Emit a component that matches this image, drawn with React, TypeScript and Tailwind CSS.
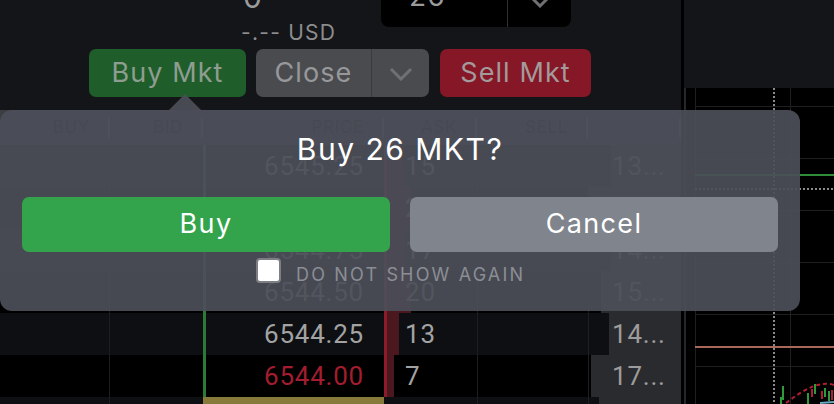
import React from "react";

type Row = {
  price: string;
  ask: string;
  askBar: number;
  right: string;
  box: number;
  last?: boolean;
  mark?: boolean;
};

const rows: Row[] = [
  { price: "6545.25", ask: "15", askBar: 16, right: "13...", box: 70 },
  { price: "6545.00", ask: "20", askBar: 24, right: "13...", box: 92 },
  { price: "6544.75", ask: "17", askBar: 18, right: "14...", box: 70 },
  { price: "6544.50", ask: "20", askBar: 24, right: "15...", box: 80 },
  { price: "6544.25", ask: "13", askBar: 12, right: "14...", box: 72 },
  { price: "6544.00", ask: "7", askBar: 7, right: "17...", box: 90, last: true },
  { price: "6543.75", ask: "", askBar: 0, right: "", box: 82, mark: true },
];

const headers = [
  { label: "BUY", w: "w-[110px]" },
  { label: "BID", w: "w-[93px]" },
  { label: "PRICE", w: "w-[181px]" },
  { label: "ASK", w: "w-[93px]" },
  { label: "SELL", w: "w-[111px]" },
  { label: "", w: "w-[93px]" },
];

function Chevron({ className }: { className?: string }) {
  return (
    <svg width="24" height="14" viewBox="0 0 24 14" className={className}>
      <polyline points="2,2 12,12 22,2" fill="none" stroke="#6f7074" strokeWidth="3" />
    </svg>
  );
}

function OrderBook() {
  return (
    <div className="flex flex-col font-['Roboto',sans-serif]">
      <div className="flex h-[35px] shrink-0 bg-[#3c3e44]">
        {headers.map((h, i) => (
          <div key={i} className={`${h.w} flex items-center justify-end`}>
            <span className="mr-[18px] font-['Inter',sans-serif] text-[17px] tracking-[0.04em] text-[#0a0a0a]">
              {h.label}
            </span>
            <div className="w-[2px] h-[20px] bg-[#6a6c72]" />
          </div>
        ))}
      </div>
      {rows.map((r, i) => (
        <div
          key={i}
          className={`flex h-[42px] shrink-0 text-[26px] leading-none tracking-[0.03em] ${i % 2 === 0 ? "bg-[#0e0f12]" : "bg-black"}`}
        >
          <div className="w-[110px] border-r border-[#1d1e21]" />
          <div className="w-[93px]" />
          <div
            className={`w-[181px] flex items-center justify-end pr-[20px] border-l-[3px] ${
              r.mark ? "border-transparent bg-[#877a3a]" : "border-[#2b7a37]"
            } ${r.last ? "text-[#a31d2e]" : "text-[#a3a3a3]"}`}
          >
            {r.mark ? "" : r.price}
          </div>
          <div
            className={`w-[93px] relative flex items-center pl-[18px] text-[#a3a3a3] border-l-[3px] ${
              r.mark ? "border-transparent" : "border-[#8e1b2a]"
            }`}
          >
            <div className="absolute left-0 inset-y-0 bg-[#4b1820]" style={{ width: r.askBar }} />
            <span className="relative">{r.ask}</span>
          </div>
          <div className="w-[111px] border-l border-[#1d1e21]" />
          <div className="w-[93px] relative flex items-center pl-[23px] border-l border-[#1d1e21] text-[#9c9c9c]">
            <div className="absolute right-0 inset-y-0 bg-[#2a2b2e]" style={{ width: r.box }} />
            <span className="relative">{r.right}</span>
          </div>
        </div>
      ))}
    </div>
  );
}

function Chart() {
  const hLines = [18.5, 70.5, 122.5, 174.5, 226.5, 278.5];
  return (
    <div className="w-[150px] shrink-0 flex flex-col">
      <div className="h-[88px] shrink-0 bg-[#141519]" />
      <div className="flex-1 bg-black">
        <svg width="150" height="316" viewBox="0 0 150 316" className="block">
          <rect x="0" y="0" width="2" height="316" fill="#26272a" />
          <line x1="11.5" y1="0" x2="11.5" y2="316" stroke="#1e1f21" />
          <line x1="106.5" y1="0" x2="106.5" y2="316" stroke="#1e1f21" />
          {hLines.map((y) => (
            <line key={y} x1="11" y1={y} x2="150" y2={y} stroke="#1e1f21" />
          ))}
          <line x1="11" y1="87" x2="150" y2="87" stroke="#2f8c3b" strokeWidth="2" />
          <line x1="11" y1="101" x2="150" y2="101" stroke="#8a8a8a" strokeWidth="2" strokeDasharray="2 2" />
          <line x1="90" y1="0" x2="90" y2="316" stroke="#8a8a8a" strokeWidth="2" strokeDasharray="2 2" />
          <line x1="11" y1="259" x2="150" y2="259" stroke="#a8685a" strokeWidth="2" />
          <rect x="98" y="298" width="2" height="14" fill="#2f9a3c" />
          <rect x="96" y="309" width="2" height="7" fill="#2f9a3c" />
          <rect x="123" y="305" width="2" height="11" fill="#2f9a3c" />
          <rect x="130" y="296" width="2" height="10" fill="#2f9a3c" />
          <rect x="140" y="300" width="2" height="9" fill="#2f9a3c" />
          <rect x="144" y="303" width="2" height="10" fill="#2f9a3c" />
          <rect x="127" y="301" width="2" height="8" fill="#b01e30" />
          <rect x="137" y="303" width="2" height="8" fill="#b01e30" />
          <rect x="147" y="302" width="2" height="10" fill="#b01e30" />
          <path
            d="M102 315 C 114 306, 127 297, 139 296 S 150 298, 152 299"
            fill="none"
            stroke="#b01e30"
            strokeWidth="2"
            strokeDasharray="4 3"
          />
          <line x1="136" y1="315" x2="150" y2="314" stroke="#6aa8c0" strokeWidth="2" />
        </svg>
      </div>
    </div>
  );
}

function Modal() {
  return (
    <div className="absolute left-0 top-[110px] w-[800px] h-[201px] rounded-[12px] bg-[rgba(75,79,88,0.93)] flex flex-col pt-[19px] px-[22px]">
      <div className="absolute left-[169px] -top-[16px] w-0 h-0 border-l-[16px] border-r-[16px] border-b-[16px] border-l-transparent border-r-transparent border-b-[rgba(75,79,88,0.93)]" />
      <div className="h-[40px] leading-[40px] text-center text-white text-[30px] tracking-[0.05em]">
        Buy 26 MKT?
      </div>
      <div className="mt-[28px] flex gap-[20px]">
        <button className="flex-1 h-[55px] rounded-[7px] bg-[#34a44c] text-white text-[27px] tracking-[0.05em]">
          Buy
        </button>
        <button className="flex-1 h-[55px] rounded-[7px] bg-[#80848c] text-white text-[27px] tracking-[0.05em]">
          Cancel
        </button>
      </div>
      <div className="mt-[6px] flex items-start pl-[234px]">
        <div className="w-[25px] h-[25px] rounded-[4px] bg-white border-2 border-[#7d7f84]" />
        <span className="ml-[15px] mt-[5px] leading-[24px] text-[18px] tracking-[0.12em] text-[#8b8e95]">
          DO NOT SHOW AGAIN
        </span>
      </div>
    </div>
  );
}

export default function App() {
  return (
    <div className="w-[834px] h-[404px] overflow-hidden relative flex bg-[#141519] font-['Inter',sans-serif]">
      <div className="w-[684px] shrink-0 flex flex-col border-r-[3px] border-black">
        <div className="h-[49px] shrink-0 flex items-start pl-[241px]">
          <div className="w-[140px] flex flex-col">
            <div className="-mt-[18px] ml-[2px] h-[30px] leading-[30px] text-[30px] text-[#9b9b9b]">0</div>
            <div className="mt-[10px] h-[22px] leading-[22px] text-[21px] tracking-[0.06em] text-[#8d8d8d]">
              -.-- USD
            </div>
          </div>
          <div className="-mt-[20px] w-[190px] h-[47px] rounded-[8px] bg-black flex">
            <div className="w-[126px] pl-[28px] pt-[1px] leading-[30px] text-[28px] tracking-[0.04em] text-[#9b9b9b]">
              26
            </div>
            <div className="flex-1 border-l border-[#2e2f33] flex items-start justify-center pt-[14px]">
              <Chevron />
            </div>
          </div>
        </div>
        <div className="h-[48px] shrink-0 flex pl-[89px] text-[27px] tracking-[0.04em]">
          <div className="w-[157px] rounded-[7px] bg-[#1f5d2b] text-[#8f9d91] flex items-center justify-center">
            Buy Mkt
          </div>
          <div className="ml-[10px] w-[173px] rounded-[7px] bg-[#4a4b4f] flex overflow-hidden">
            <div className="w-[116px] flex items-center justify-center text-[#98989a] border-r border-[#3b3c40]">
              Close
            </div>
            <div className="flex-1 flex items-center justify-center pt-[2px]">
              <Chevron />
            </div>
          </div>
          <div className="ml-[11px] w-[151px] rounded-[7px] bg-[#851726] text-[#a39a9c] flex items-center justify-center">
            Sell Mkt
          </div>
        </div>
        <div className="h-[13px] shrink-0" />
        <OrderBook />
      </div>
      <Chart />
      <Modal />
    </div>
  );
}
